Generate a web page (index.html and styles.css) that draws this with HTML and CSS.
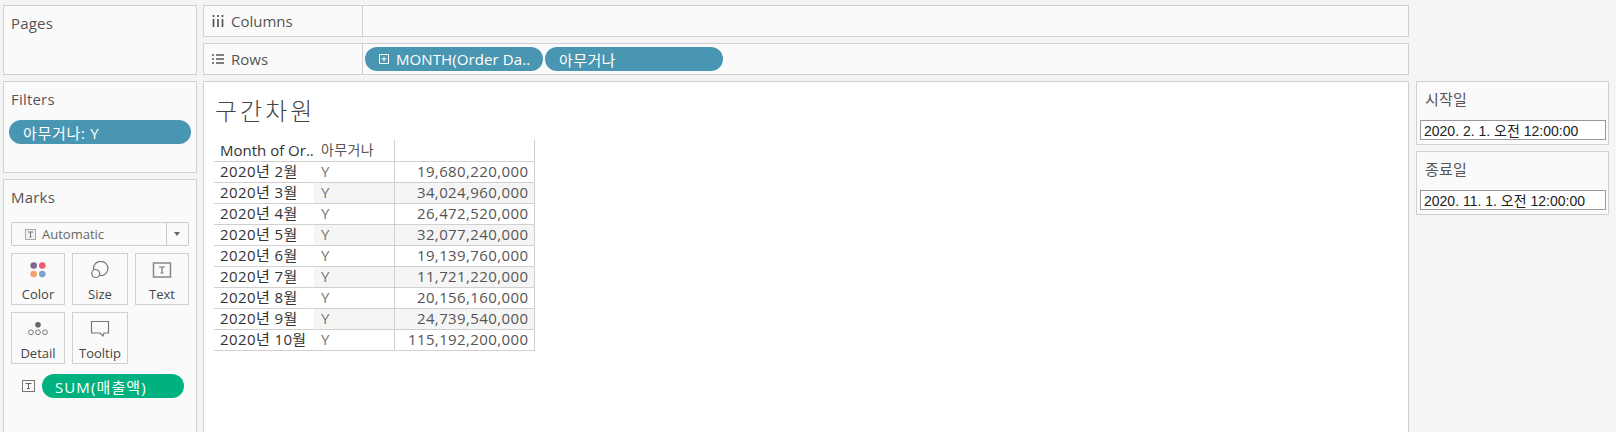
FILE: index.html
```html
<!DOCTYPE html>
<html lang="ko">
<head>
  <meta charset="UTF-8" />
  <title>구간차원</title>
  <link rel="stylesheet" href="styles.css">
</head>
<body>
  <div class="workspace">
    <aside class="left-col">
      <section class="panel pages-panel">
        <h2>Pages</h2>
      </section>
      <section class="panel filters-panel">
        <h2>Filters</h2>
        <div class="pill pill-blue filter-pill">아무거나: Y</div>
      </section>
      <section class="panel marks-panel">
        <h2>Marks</h2>
        <div class="mark-select">
          <svg class="select-icon" width="11" height="11" viewBox="0 0 11 11"><rect x="0.5" y="0.5" width="10" height="10" fill="#f0f0f0" stroke="#aaa"/><path d="M3 3h5M5.5 3v5M4.5 8h2" fill="none" stroke="#777"/></svg>
          <span class="select-label">Automatic</span>
          <span class="select-arrow"></span>
        </div>
        <div class="mark-cards">
          <div class="mark-card card-wide">
            <svg width="20" height="18" viewBox="0 0 20 18"><circle cx="5.700" cy="4.500" r="3.300" fill="#7b6694"/><circle cx="14.300" cy="4.500" r="3.300" fill="#f0596f"/><circle cx="5.700" cy="13" r="3.300" fill="#f5a26d"/><circle cx="14.300" cy="13" r="3.300" fill="#7ba5d0"/></svg>
            <span>Color</span>
          </div>
          <div class="mark-card card-mid">
            <svg width="20" height="18" viewBox="0 0 20 18"><circle cx="10.700" cy="7.500" r="7.200" fill="none" stroke="#777" stroke-width="1.200"/><circle cx="5.700" cy="12.500" r="4" fill="#fafafa" stroke="#777" stroke-width="1.200"/></svg>
            <span>Size</span>
          </div>
          <div class="mark-card card-wide">
            <svg width="20" height="18" viewBox="0 0 20 18"><rect x="1.500" y="2" width="17" height="14" fill="none" stroke="#888" stroke-width="1.500"/><path d="M7 6h6M10 6v6M8.500 12h3" fill="none" stroke="#777" stroke-width="1.200"/></svg>
            <span>Text</span>
          </div>
          <div class="mark-card card-wide">
            <svg width="20" height="18" viewBox="0 0 20 18"><circle cx="10" cy="4.700" r="2.800" fill="#666"/><circle cx="3" cy="12.300" r="2.400" fill="none" stroke="#777"/><circle cx="10" cy="12.300" r="2.400" fill="none" stroke="#777"/><circle cx="17" cy="12.300" r="2.400" fill="none" stroke="#777"/></svg>
            <span>Detail</span>
          </div>
          <div class="mark-card card-mid">
            <svg width="20" height="18" viewBox="0 0 20 18"><path d="M1.500 1.500h17v11.500h-4.500l-1 3-3-3h-8.500z" fill="none" stroke="#777" stroke-width="1.200"/></svg>
            <span>Tooltip</span>
          </div>
        </div>
        <div class="mark-field">
          <svg width="13" height="12" viewBox="0 0 13 12"><rect x="0.500" y="0.500" width="12" height="11" fill="none" stroke="#777"/><path d="M3.500 3.500h6M6.500 3.500v5M5 8.500h3" fill="none" stroke="#666"/></svg>
          <div class="pill pill-green sum-pill">SUM(매출액)</div>
        </div>
      </section>
    </aside>

    <main class="center-col">
      <div class="panel shelf">
        <div class="shelf-label">
          <svg width="12" height="12" viewBox="0 0 12 12"><path d="M1.500 0v2M1.500 4v8M6 0v2M6 4v8M10.500 0v2M10.500 4v8" stroke="#555" stroke-width="1.700" fill="none"/></svg>
          <span>Columns</span>
        </div>
        <div class="shelf-body"></div>
      </div>
      <div class="panel shelf">
        <div class="shelf-label">
          <svg width="12" height="12" viewBox="0 0 12 12"><path d="M0 2h2M4 2h8M0 6h2M4 6h8M0 10h2M4 10h8" stroke="#555" stroke-width="1.700" fill="none"/></svg>
          <span>Rows</span>
        </div>
        <div class="shelf-body">
          <div class="pill pill-blue month-pill">
            <svg width="10" height="10" viewBox="0 0 10 10"><rect x="0.500" y="0.500" width="9" height="9" fill="none" stroke="#fff"/><path d="M2.500 5h5M5 2.500v5" stroke="#fff" fill="none"/></svg>
            <span>MONTH(Order Da..</span>
          </div>
          <div class="pill pill-blue any-pill">아무거나</div>
        </div>
      </div>
      <section class="view">
        <h1>구간차원</h1>
        <table class="crosstab">
          <thead>
            <tr><th class="col-month">Month of Or..</th><th class="col-any">아무거나</th><th class="col-value"></th></tr>
          </thead>
          <tbody>
            <tr><td class="col-month">2020년 2월</td><td class="col-any">Y</td><td class="col-value">19,680,220,000</td></tr>
            <tr class="shade"><td class="col-month">2020년 3월</td><td class="col-any">Y</td><td class="col-value">34,024,960,000</td></tr>
            <tr><td class="col-month">2020년 4월</td><td class="col-any">Y</td><td class="col-value">26,472,520,000</td></tr>
            <tr class="shade"><td class="col-month">2020년 5월</td><td class="col-any">Y</td><td class="col-value">32,077,240,000</td></tr>
            <tr><td class="col-month">2020년 6월</td><td class="col-any">Y</td><td class="col-value">19,139,760,000</td></tr>
            <tr class="shade"><td class="col-month">2020년 7월</td><td class="col-any">Y</td><td class="col-value">11,721,220,000</td></tr>
            <tr><td class="col-month">2020년 8월</td><td class="col-any">Y</td><td class="col-value">20,156,160,000</td></tr>
            <tr class="shade"><td class="col-month">2020년 9월</td><td class="col-any">Y</td><td class="col-value">24,739,540,000</td></tr>
            <tr><td class="col-month">2020년 10월</td><td class="col-any">Y</td><td class="col-value">115,192,200,000</td></tr>
          </tbody>
        </table>
      </section>
    </main>

    <aside class="right-col">
      <section class="panel param-panel">
        <h2>시작일</h2>
        <input class="param-input" type="text" value="2020. 2. 1. 오전 12:00:00" />
      </section>
      <section class="panel param-panel">
        <h2>종료일</h2>
        <input class="param-input" type="text" value="2020. 11. 1. 오전 12:00:00" />
      </section>
    </aside>
  </div>
</body>
</html>
```

FILE: styles.css
```css
* {
  box-sizing: border-box;
  margin: 0;
  padding: 0;
}

html,
body {
  height: 432px;
  overflow: hidden;
}

body {
  font-family: "Open Sans", "Noto Sans CJK KR", sans-serif;
  font-size: 14px;
  background: #f5f5f5;
  color: #444;
}

.workspace {
  display: grid;
  grid-template-columns: 194px 1206px 194px;
  column-gap: 6px;
  padding: 5px 0 0 3px;
  height: 432px;
}

.panel {
  background: #fafafa;
  border: 1px solid #d0d0d0;
}

.panel h2 {
  font-size: 15px;
  font-weight: 400;
  line-height: 20px;
  letter-spacing: 0.2px;
  color: #555;
}

.left-col,
.center-col,
.right-col {
  display: flex;
  flex-direction: column;
  gap: 6px;
  height: 440px;
}

/* pills */
.pill {
  display: flex;
  align-items: center;
  height: 24px;
  border-radius: 12px;
  color: #fff;
  font-size: 15px;
  letter-spacing: 0.4px;
}

.pill-blue {
  background: #4996b2;
}

.pill-green {
  background: #00b180;
}

/* left column */
.pages-panel {
  height: 70px;
  padding: 7px 7px;
}

.filters-panel {
  height: 92px;
  padding: 7px 7px;
}

.filter-pill {
  width: 182px;
  margin: 11px 0 0 -2px;
  padding-left: 14px;
  letter-spacing: 0.7px;
}

.marks-panel {
  flex: 1;
  padding: 7px 7px;
}

.mark-select {
  display: flex;
  align-items: center;
  width: 178px;
  height: 24px;
  margin-top: 15px;
  border: 1px solid #ccc;
  border-radius: 2px;
  color: #666;
  font-size: 13px;
}

.select-icon {
  margin-left: 13px;
}

.select-label {
  flex: 1;
  margin-left: 6px;
}

.select-arrow {
  position: relative;
  width: 22px;
  height: 22px;
  border-left: 1px solid #ccc;
}

.select-arrow::after {
  content: "";
  position: absolute;
  top: 9px;
  left: 7px;
  border-left: 3.500px solid transparent;
  border-right: 3.500px solid transparent;
  border-top: 4px solid #666;
}

.mark-cards {
  display: grid;
  grid-template-columns: 54px 56px 54px;
  grid-auto-rows: 52px;
  column-gap: 7px;
  row-gap: 7px;
  margin-top: 7px;
}

.mark-card {
  display: flex;
  flex-direction: column;
  align-items: center;
  padding-top: 7px;
  border: 1px solid #d0d0d0;
  font-size: 13px;
  line-height: 18px;
  color: #444;
}

.mark-card svg {
  margin-bottom: 6px;
}

.mark-field {
  display: flex;
  align-items: center;
  gap: 7px;
  margin: 10px 0 0 11px;
}

.sum-pill {
  width: 142px;
  padding-left: 13px;
  letter-spacing: 1.1px;
}

/* shelves */
.center-col .shelf {
  display: flex;
  height: 32px;
  flex: none;
}

.shelf-label {
  display: flex;
  align-items: center;
  width: 159px;
  padding-left: 8px;
  gap: 7px;
  border-right: 1px solid #d0d0d0;
  font-size: 15px;
  color: #555;
}

.shelf-body {
  display: flex;
  align-items: center;
  gap: 2px;
  padding-left: 2px;
}

.month-pill {
  width: 178px;
  padding-left: 14px;
  gap: 7px;
  letter-spacing: 0.1px;
}

.any-pill {
  width: 178px;
  padding-left: 14px;
}

/* view */
.view {
  flex: 1;
  background: #fff;
  border: 1px solid #d0d0d0;
  padding: 12px 0 0 10px;
}

.view h1 {
  margin-left: 1px;
  font-size: 24px;
  font-weight: 300;
  line-height: 34px;
  letter-spacing: 3px;
  color: #444;
}

.crosstab {
  margin-top: 12px;
  border-collapse: collapse;
  table-layout: fixed;
  width: 320px;
}

.crosstab tr {
  height: 21px;
}

.crosstab th,
.crosstab td {
  padding: 0 5px;
  font-size: 15px;
  line-height: 20px;
  text-align: left;
  white-space: nowrap;
  letter-spacing: 0.4px;
  border-bottom: 1px solid #d0d0d0;
}

.crosstab td {
  line-height: 18px;
  padding-bottom: 2px;
}

.crosstab th {
  font-weight: 400;
  letter-spacing: 0;
}

.crosstab .col-month {
  width: 100px;
  padding-left: 6px;
  color: #333;
}

.crosstab .col-any {
  width: 80px;
  padding-left: 7px;
  color: #777;
  border-right: 1px solid #d0d0d0;
}

.crosstab th.col-any {
  font-size: 14px;
  letter-spacing: 0.4px;
  color: #555;
}

.crosstab .col-value {
  width: 140px;
  text-align: right;
  color: #555;
  border-right: 1px solid #d0d0d0;
}

.crosstab .shade .col-any,
.crosstab .shade .col-value {
  background: #f5f5f5;
}

/* right column */
.right-col {
  margin-left: 1px;
  padding-top: 76px;
}

.param-panel {
  height: 64px;
  padding: 7px 3px;
}

.param-panel h2 {
  padding-left: 5px;
}

.param-input {
  display: block;
  width: 186px;
  height: 20px;
  margin-top: 11px;
  padding: 0 3px;
  border: 1px solid #999;
  background: #fff;
  font-family: "Liberation Sans", "Noto Sans CJK KR", sans-serif;
  font-size: 14px;
  color: #222;
}
```
